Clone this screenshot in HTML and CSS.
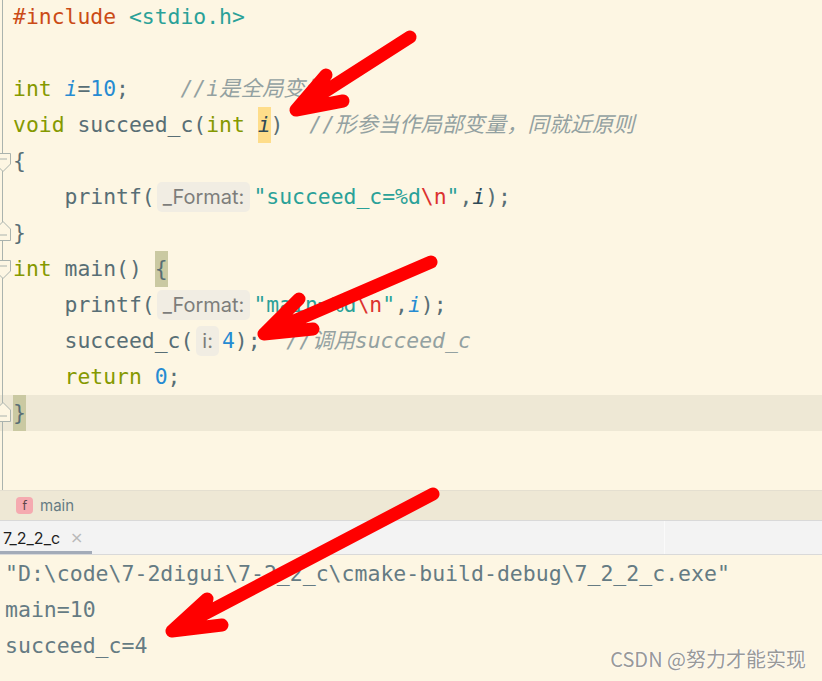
FILE: index.html
```html
<!DOCTYPE html>
<html>
<head>
<meta charset="utf-8">
<link rel="stylesheet" href="styles.css">
</head>
<body>
<div class="page">
  <div class="editor">
    <div class="rows">
      <div class="row"><div class="gut"></div><div class="code"><span class="pp">#include</span> <span class="str">&lt;stdio.h&gt;</span></div></div>
      <div class="row"><div class="gut"></div><div class="code"> </div></div>
      <div class="row"><div class="gut"></div><div class="code"><span class="kw">int</span> <span class="gv">i</span>=<span class="num">10</span>;    <span class="cm">//i是全局变量</span></div></div>
      <div class="row"><div class="gut"></div><div class="code"><span class="kw">void</span> succeed_c(<span class="kw">int</span> <span class="pv hl">i</span>)  <span class="cm">//形参当作局部变量，同就近原则</span></div></div>
      <div class="row"><div class="gut"><svg class="fold fold-open" width="17" height="20" viewBox="0 0 17 20"><polygon points="0.5,0.5 15.5,0.5 15.5,11 8,18.5 0.5,11" /><line x1="4" y1="6" x2="12" y2="6" /></svg></div><div class="code">{</div></div>
      <div class="row"><div class="gut"></div><div class="code">    printf(<span class="hint">_Format:</span><span class="str">"succeed_c=%d<span class="esc">\n</span>"</span>,<span class="pv">i</span>);</div></div>
      <div class="row"><div class="gut"><svg class="fold fold-close" width="17" height="20" viewBox="0 0 17 20"><polygon points="8,0.5 15.5,8 15.5,19.5 0.5,19.5 0.5,8" /><line x1="4" y1="14" x2="12" y2="14" /></svg></div><div class="code">}</div></div>
      <div class="row"><div class="gut"><svg class="fold fold-main" width="17" height="20" viewBox="0 0 17 20"><polygon points="0.5,0.5 15.5,0.5 15.5,11 8,18.5 0.5,11" /><line x1="4" y1="6" x2="12" y2="6" /></svg></div><div class="code"><span class="kw">int</span> main() <span class="brace">{</span></div></div>
      <div class="row"><div class="gut"></div><div class="code">    printf(<span class="hint">_Format:</span><span class="str">"main=%d<span class="esc">\n</span>"</span>,<span class="gv">i</span>);</div></div>
      <div class="row"><div class="gut"></div><div class="code">    succeed_c(<span class="hint hint-i">i:</span><span class="num">4</span>);  <span class="cm">//调用succeed_c</span></div></div>
      <div class="row"><div class="gut"></div><div class="code">    <span class="kw">return</span> <span class="num">0</span>;</div></div>
      <div class="row current"><div class="gut"><svg class="fold fold-end" width="17" height="20" viewBox="0 0 17 20"><polygon points="8,0.5 15.5,8 15.5,19.5 0.5,19.5 0.5,8" /><line x1="4" y1="14" x2="12" y2="14" /></svg></div><div class="code"><span class="brace">}</span></div></div>
      <div class="row"><div class="gut"></div><div class="code"> </div></div>
    </div>
  </div>
  <div class="crumbs"><span class="ficon">f</span><span class="crumb">main</span></div>
  <div class="tabs"><div class="tab"><span class="tabname">7_2_2_c</span><span class="tabx">×</span></div><div class="tabfill"></div><div class="tabright"></div></div>
  <div class="console">
    <div class="cline">"D:\code\7-2digui\7-2_2_c\cmake-build-debug\7_2_2_c.exe"</div>
    <div class="cline">main=10</div>
    <div class="cline">succeed_c=4</div>
  </div>
  <div class="watermark">CSDN @努力才能实现</div>
  <svg class="arrows" width="822" height="681" viewBox="0 0 822 681">
    <g fill="none" stroke="#ff0000" stroke-width="13" stroke-linecap="round" stroke-linejoin="round">
      <path d="M410 37 L296 110 M326 75 L296 110 L343 101" />
      <path d="M431 262 L264 334 M299 299 L264 334 L313 329" />
      <path d="M433 494 L172 631 M207 599 L172 631 L222 625" />
    </g>
  </svg>
</div>
</body>
</html>
```

FILE: styles.css
```css
html, body {
  margin: 0;
  padding: 0;
  background: #fdf6e3;
}

.page {
  position: relative;
  width: 822px;
  height: 681px;
  overflow: hidden;
  background: #fdf6e3;
  display: flex;
  flex-direction: column;
}

.editor {
  height: 490px;
  flex: none;
  overflow: hidden;
  background: linear-gradient(#aab3ae, #aab3ae) 2px 0 / 1px 100% no-repeat, #fdf6e3;
}

.rows {
  margin-top: -1px;
}

.row {
  display: flex;
  height: 36px;
}

.row.current {
  background: #eee8d5;
}

.gut {
  position: relative;
  width: 13px;
  flex: none;
  background: linear-gradient(#aab3ae, #aab3ae) 2px 0 / 1px 100% no-repeat;
}

.fold {
  position: absolute;
  left: -5px;
}

.fold polygon {
  fill: #fdf6e3;
  stroke: #aab3ae;
  stroke-width: 1;
}

.fold line {
  stroke: #aab3ae;
  stroke-width: 1;
}

.fold-open { top: 10px; }
.fold-close { top: 6px; }
.fold-main { top: 9px; }
.fold-end { top: 7px; }

.code {
  font-family: "DejaVu Sans Mono", "Noto Sans CJK SC", monospace;
  font-size: 21.4px;
  line-height: 36px;
  white-space: pre;
  color: #586e75;
}

.pp { color: #cb4b16; }
.str { color: #2aa198; }
.esc { color: #dc322f; }
.kw { color: #859900; }
.num { color: #268bd2; }
.gv { color: #268bd2; font-style: italic; }
.pv { color: #2f4a56; font-style: italic; }
.cm {
  color: #93a1a1;
  font-style: italic;
}

.hl {
  display: inline-block;
  background: #fedd8a;
  height: 36px;
}

.brace {
  display: inline-block;
  background: #cac9a2;
  height: 36px;
}

.hint {
  display: inline-block;
  vertical-align: top;
  margin: 3px 3px 0 2px;
  padding: 0 6px;
  height: 30px;
  line-height: 30px;
  border-radius: 5px;
  background: #f1ede3;
  color: #7d7d7b;
  font-family: "Inter", "Roboto", sans-serif;
  font-size: 20px;
  font-style: normal;
}

.hint-i {
  margin: 3px 3px 0 3px;
  padding: 0 6px;
}

.crumbs {
  flex: none;
  height: 29px;
  border-top: 1px solid #e4dfd0;
  border-bottom: 1px solid #d9d9d9;
  background: #eee8d5;
  display: flex;
  align-items: center;
  padding-left: 16px;
  gap: 7px;
}

.ficon {
  width: 17px;
  height: 17px;
  border-radius: 4px;
  background: #f5aab0;
  color: #5a4548;
  font-family: "DejaVu Sans", sans-serif;
  font-size: 12px;
  display: flex;
  align-items: center;
  justify-content: center;
}

.crumb {
  font-family: "Inter", "Roboto", sans-serif;
  font-size: 15px;
  color: #657b83;
}

.tabs {
  flex: none;
  height: 33px;
  border-bottom: 1px solid #d9d9d9;
  background: #f3f3f3;
  display: flex;
}

.tab {
  width: 92px;
  box-sizing: border-box;
  border-bottom: 3px solid #a3abb8;
  display: flex;
  align-items: center;
  padding-left: 3px;
  gap: 10px;
}

.tabname {
  font-family: "Inter", "Roboto", sans-serif;
  font-size: 16px;
  color: #1e1e1e;
  padding-top: 3px;
}

.tabx {
  font-family: "DejaVu Sans", sans-serif;
  font-size: 16px;
  color: #b9b9b9;
  padding-top: 2px;
}

.tabfill {
  width: 572px;
  border-right: 1px solid #fafafa;
}

.tabright {
  flex: 1;
}

.console {
  flex: 1;
  padding: 1px 0 0 5px;
  background: #fdf6e3;
}

.cline {
  font-family: "DejaVu Sans Mono", monospace;
  font-size: 21.5px;
  line-height: 36px;
  white-space: pre;
  color: #657b83;
}

.watermark {
  position: absolute;
  right: 16px;
  bottom: 8px;
  font-family: "Noto Sans CJK SC", sans-serif;
  font-size: 20px;
  color: rgba(125, 125, 125, 0.8);
  text-shadow: 0 0 2px #ffffff, 0 0 1px #ffffff;
}

.arrows {
  position: absolute;
  left: 0;
  top: 0;
  pointer-events: none;
}
```
